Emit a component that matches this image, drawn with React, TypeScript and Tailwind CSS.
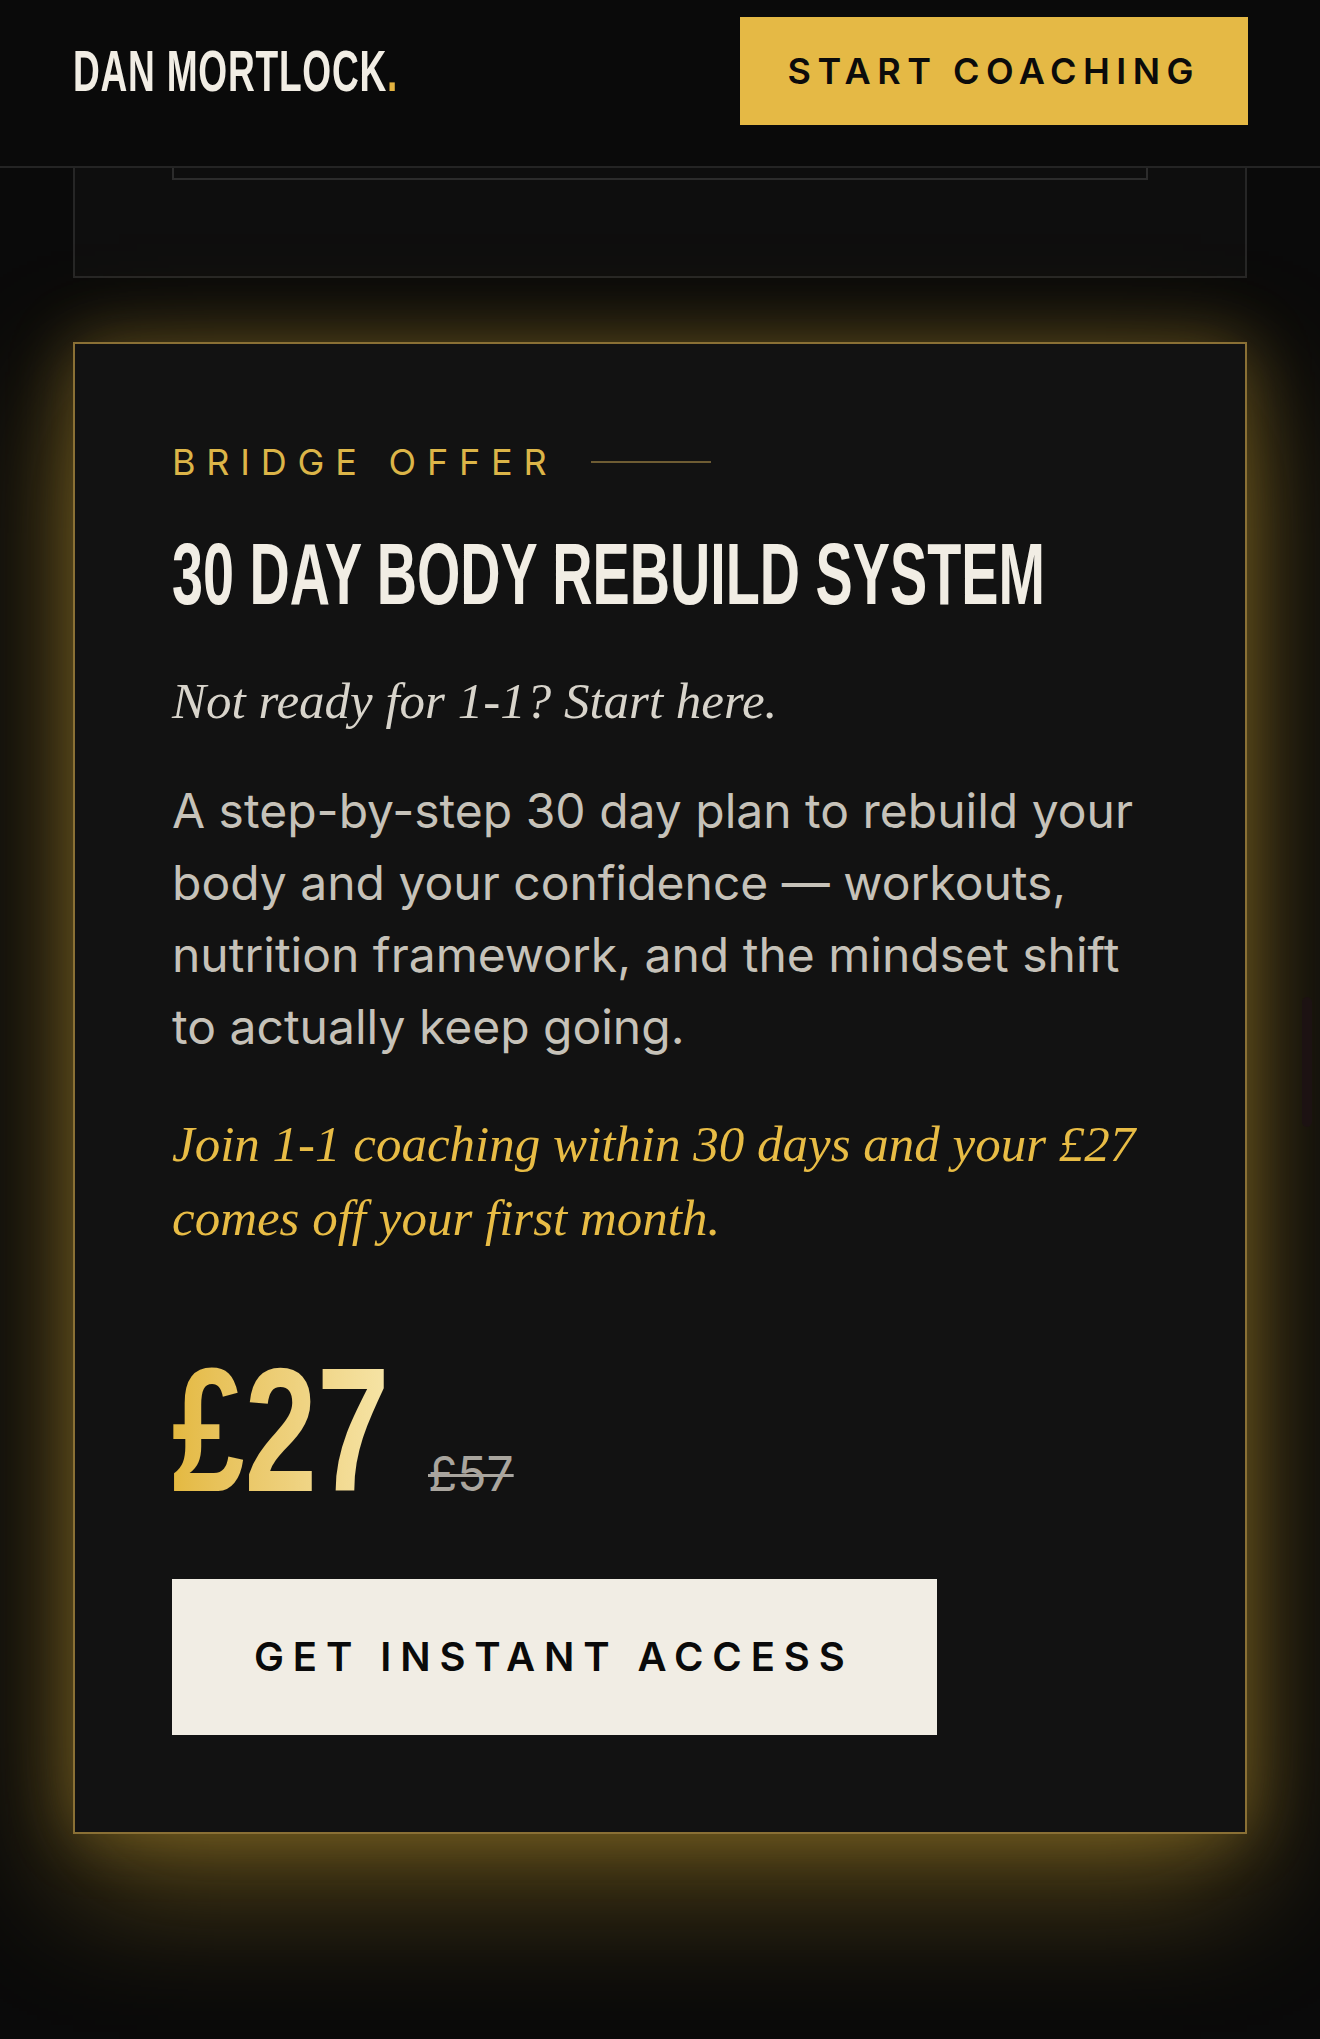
import React from 'react'

// Condensed display type is faked with a narrowed Liberation Sans Bold
const DISPLAY = "font-['Liberation_Sans',Arial,sans-serif] font-bold"
const SERIF = "font-['Liberation_Serif','Times_New_Roman',serif] italic"

function Header() {
  return (
    <header className="relative z-10 h-[168px] border-b-2 border-[#242424] bg-[#0a0a0a]">
      <div className="flex h-[142px] items-center justify-between pl-[73px] pr-[72px]">
        <div
          className={`${DISPLAY} block origin-left scale-x-[0.64] whitespace-nowrap text-[58px] leading-none tracking-[0.02em] text-[#f1ede4]`}
        >
          DAN MORTLOCK<span className="text-[#e3b341]">.</span>
        </div>
        <a
          href="#"
          className="flex h-[108px] items-center bg-[#e5b945] px-[48px] text-[36px] font-semibold tracking-[0.18em] text-[#0b0b0b]"
        >
          START COACHING
        </a>
      </div>
    </header>
  )
}

function PreviousCardTail() {
  return (
    <div className="h-[110px] border-x-2 border-b-2 border-[#262626] bg-[#0e0e0e]">
      <div className="mx-[97px] h-[12px] border-x-2 border-b-2 border-[#2c2c2c]" />
    </div>
  )
}

function BridgeOffer() {
  return (
    <section className="mt-[64px] border-2 border-[#8a7035] bg-[#121212] px-[97px] pb-[97px] pt-[96px] shadow-[0_0_60px_rgba(214,170,52,0.32),0_50px_130px_rgba(220,174,52,0.4)]">
      <div className="flex items-center">
        <span className="text-[36px] leading-[44px] tracking-[0.3em] text-[#dcb548]">BRIDGE OFFER</span>
        <span className="ml-[34px] h-[2px] w-[120px] bg-[#6e5c33]" />
      </div>

      <h2
        className={`${DISPLAY} mt-[46px] origin-left scale-x-[0.641] whitespace-nowrap text-[87px] leading-[87px] text-[#f1ede4]`}
      >
        30 DAY BODY REBUILD SYSTEM
      </h2>

      <p className={`${SERIF} mt-[56px] text-[51px] leading-[56px] text-[#d8d4cb]`}>
        Not ready for 1-1? Start here.
      </p>

      <p className="mt-[46px] text-[48px] leading-[72px] text-[#c6c2b9]">
        A step-by-step 30 day plan to rebuild your body and your confidence — workouts, nutrition framework, and
        the mindset shift to actually keep going.
      </p>

      <p className={`${SERIF} mt-[44px] text-[51px] leading-[74px] text-[#e8bc45]`}>
        Join 1-1 coaching within 30 days and your £27 comes off your first month.
      </p>

      <div className="mt-[87px] flex items-baseline">
        <span className={`${DISPLAY} block w-[211px] whitespace-nowrap text-[177px] leading-[177px]`}>
          <span className="inline-block origin-left scale-x-[0.736] bg-linear-to-r from-[#e4b940] to-[#f6e4a6] bg-clip-text text-transparent">
            £27
          </span>
        </span>
        <span className="ml-[45px] text-[48px] leading-none text-[#a9a59e] line-through decoration-[3px]">£57</span>
      </div>

      <button className="mt-[60px] flex h-[156px] w-[765px] items-center bg-[#f1ede4] pl-[82px] text-[40px] font-semibold tracking-[0.222em] text-[#0a0a0a]">
        GET INSTANT ACCESS
      </button>
    </section>
  )
}

export default function App() {
  return (
    <div className="relative min-h-[2039px] overflow-hidden bg-[#0a0a0a] font-['Inter',sans-serif]">
      <Header />
      <main className="px-[73px]">
        <PreviousCardTail />
        <BridgeOffer />
      </main>
      {/* scroll indicator */}
      <div className="absolute right-[8px] top-[997px] h-[130px] w-[10px] rounded-full bg-[#1c1212]" />
    </div>
  )
}
